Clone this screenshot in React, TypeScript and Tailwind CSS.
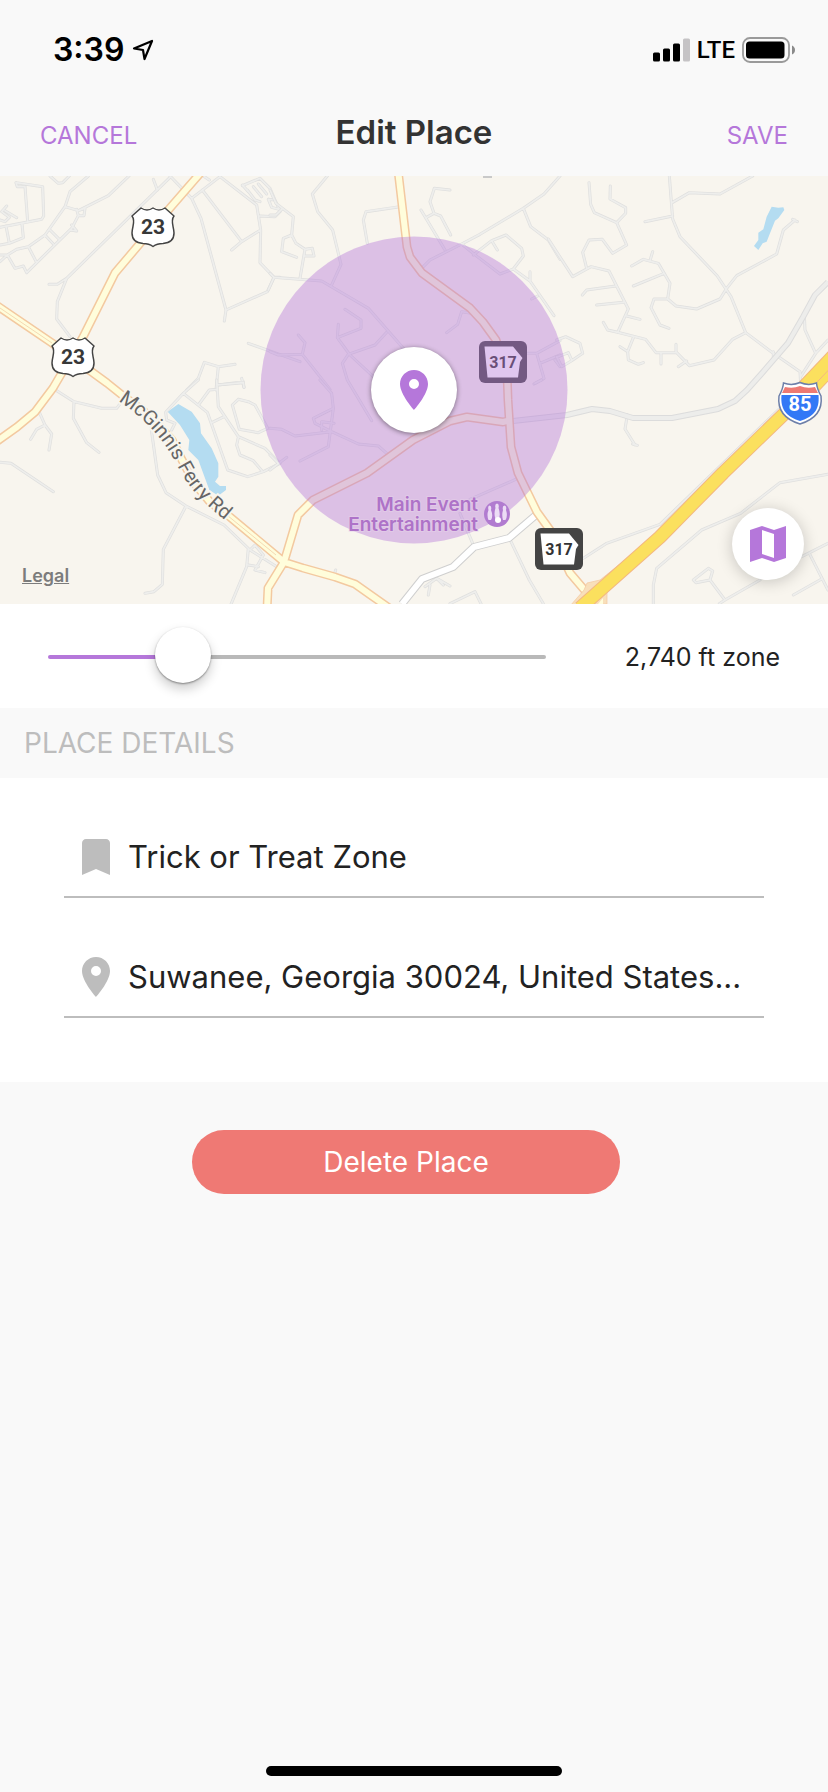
import React, { useState } from "react";
import { MdBookmark, MdLocationOn } from "react-icons/md";

const MIN_ZONE = 500;
const MAX_ZONE = 9740;

// Street geometry, stored per map tile at three units to the pixel
const tiles = [
  {
    id: "nw",
    transform: "translate(0 170) scale(0.33333)",
    water: "",
    streets:
      "M48 38L52 50L75 50L83 155M48 38L128 50L131 138L125 148L0 172M0 150L15 155L28 142L5 125L20 108M15 122L50 143M18 168L28 220M0 225L28 220L70 203L66 162M150 18L175 40L188 38L208 18M265 18L210 65L195 110L135 195L85 230L50 238L22 255L0 275M195 110L235 122L325 77L387 18M235 122L255 115L252 137L235 137L230 118M235 137L215 175L80 308L70 288L45 295L22 255M0 255L22 255M85 230L110 278M135 195L160 222M150 180L178 208M215 165L230 183L210 180M510 22L200 325L172 343L147 343M200 325L172 395L170 447L210 500M460 28L472 60M510 18L575 85L603 145L678 420L673 453M678 420L802 365L822 322L840 322M575 85L660 20L770 105L782 180L780 278L822 322M607 60L725 215L695 240M725 215L782 180M780 138L825 140L840 125M610 18L628 30M727 45L745 65M727 47L780 25L810 55L825 90M742 60L765 90L780 95M760 50L785 80M775 42L800 72M805 88L825 90L838 118L815 112L805 88M745 520L900 575M560 660L595 625L613 577L655 590L705 583M655 590L648 660M655 645L730 635M725 625L732 652",
  },
  {
    id: "sw",
    transform: "translate(0 380) scale(0.33333)",
    water:
      "M503 95L535 72L575 95L600 130L603 160L635 205L655 250L655 290L645 305L660 318L678 318L678 330L655 347L628 330L595 240L565 210L568 180L540 135Z",
    streets:
      "M170 32L222 65L305 85L350 85L365 65M222 65L220 115L260 188L297 217M118 97L135 135L110 148L92 178M135 135L155 162L147 210M0 247L33 250L160 335M452 135L473 285L498 338L558 378L672 435L750 510L830 560M558 378L490 508L487 613L462 635L435 640M595 0L550 40L497 97L500 120L525 130L515 150M550 40L622 97L683 270L743 290L790 275L840 250M595 75L628 30L652 28M650 0L655 80L715 170L795 205L840 250M650 15L730 8L732 22M635 128L672 110M715 58L697 75L718 148L775 158L803 145L765 75L745 65L715 58M715 172L710 195L720 225L760 242L788 275M745 505L740 560L690 680M750 510L765 495L790 525L765 570L795 578M745 555L775 560",
  },
  {
    id: "n",
    transform: "translate(270 170) scale(0.33333)",
    water: "",
    streets:
      "M0 60L18 100L70 140L65 195L40 205L35 245L80 262M65 195L78 220L105 238L90 325M105 238L127 235L132 258L105 258M0 135L18 135L35 118M-5 360L12 322L155 333L295 415L400 535M0 310L12 322M172 18L127 72L143 125L188 180L213 283L185 345M390 110L288 125L280 150L292 220M540 60L493 55L480 95L492 130L512 138L542 195M492 130L468 143M453 120L525 240M870 18L822 72L760 115L630 193L575 222L480 270L460 290M760 115L782 170L835 210L870 268M575 222L622 260L690 312L730 297L760 258L755 235L708 195L665 212L610 255M665 212L682 240M730 297L780 333L852 437M780 333L780 305M785 387L803 378M225 418L273 450L273 475L202 503L205 463M202 503L240 555L310 620M350 487L315 525L235 553L217 580L232 630L305 752M85 495L105 518L97 553L25 555L0 545M97 553L180 658M530 488L563 463L575 425L605 430M770 550L800 550L870 512M800 550L822 625L792 642M810 580L870 555M855 570L870 590",
  },
  {
    id: "s",
    transform: "translate(270 380) scale(0.33333)",
    water: "",
    streets:
      "M150 0L185 40L190 85L175 200L90 243M190 85L130 115L135 130L185 155L265 192L325 198L350 220M155 150L155 125L192 130M0 145L35 148L75 168L185 155M0 225L25 250M0 270L50 232M795 10L815 0M600 358L740 297M570 400L608 490M723 485L778 600L820 671M190 593L197 570M465 620L500 595L540 618M480 615L475 645M500 595L520 615M540 671L615 635L633 671",
  },
  {
    id: "ne",
    transform: "translate(550 170) scale(0.33333)",
    water:
      "M665 110L685 113L700 112L703 120L685 145L675 152L660 190L650 215L638 220L625 240L612 228L625 210L625 188L640 178L650 140Z",
    streets:
      "M117 38L122 103L133 128L200 158L227 130L227 113L180 87L181 48M200 158L230 225L188 250L157 208L117 210L98 247L110 295M-5 207L68 320L123 290L177 303L235 417L203 487M197 348L110 360L97 375M220 397L140 405M230 438L270 448M160 457L173 480L203 487L287 508L318 548L380 548L418 587L492 570L548 508L587 488M250 503L233 545L235 570L265 583L280 578M210 530L233 545M333 548L333 582M378 548L378 523M385 590L410 573M358 18L368 147L390 200L502 318L543 380L587 488L670 550L750 605L752 640M368 97L418 68L510 72L608 18M285 155L368 138M245 288L280 268L325 280L360 340L353 387L378 408L440 417L510 387L530 355L560 317L680 252L700 180L735 150M728 148L742 155M300 272L308 245M250 348L343 310M353 387L312 387L303 413L330 465L357 475M763 435L765 480L797 550L834 510M797 550L752 620M670 545L670 570L640 610M20 510L47 500L90 520L98 550L65 572L35 590L20 560M20 562L55 548L65 570",
  },
  {
    id: "se",
    transform: "translate(550 380) scale(0.33333)",
    water: "",
    streets:
      "M232 105L225 147L255 195M248 192L262 196M100 535L170 490L330 433L700 75M310 680L310 615L320 565L455 450L572 400L690 308L834 283M430 600L475 565L488 573L480 600L438 608ZM480 600L525 660L508 671M525 660L630 600M755 530L834 490M778 520L834 630M730 645L815 597",
  },
];

const avenues =
  "M828 282L815 295L803 317L788 343L763 372L747 390L735 401L718 409L672 418L633 418L610 411L592 409L567 415L513 421";

const mainRoads =
  "M203 170L170 208L115 273L83 337L53 388L35 412L17 427L-4 442M-4 305L52 343L107 383L122 395L150 416L172 440L182 460L195 484L210 502L230 517L284 562L303 568L335 577L355 584L372 596L392 610M284 562L268 588L267 610M284 562L298 515L313 500L367 473L413 440L450 421L467 417L503 422L511 420M398 170L407 247L410 257L422 273L470 308L483 322L496 340L507 372L508 400L511 447L518 473L537 512L550 530L570 573L587 593L600 612";

const UsShield = ({ x, y, label }: { x: number; y: number; label: string }) => (
  <g transform={`translate(${x} ${y})`}>
    <path
      d="M-12-19Q-6-15 0-19Q6-15 12-19L21-11C17-6 21 0 21 6C21 13 16 16 10 16.500Q4 16.500 0 19.500Q-4 16.500-10 16.500C-16 16-21 13-21 6C-21 0-17-6-21-11Z"
      fill="#fff"
      stroke="#444"
      strokeWidth="1.500"
      strokeLinejoin="round"
    />
    <text y="7" textAnchor="middle" className="fill-[#383838] font-[Roboto,sans-serif] text-[21px] font-bold">
      {label}
    </text>
  </g>
);

const StateShield = ({ x, y }: { x: number; y: number }) => (
  <g transform={`translate(${x} ${y})`}>
    <rect x="-24" y="-21" width="48" height="42" rx="6" fill="#444" />
    <path d="M-18.500-15.500H10L19.500-4L17-0L15 15.500H-15.500Z" fill="#fff" />
    <text x="0" y="6" textAnchor="middle" className="fill-[#333] font-[Roboto,sans-serif] text-[16px] font-bold">
      317
    </text>
  </g>
);

const InterstateShield = () => (
  <g transform="translate(800 403)">
    <path
      d="M-16.500-20Q-8-17 0-20.500Q8-17 16.500-20Q17-14 21-7C23 9 13 17 0 21C-13 17-23 9-21-7Q-17-14-16.500-20Z"
      fill="#fff"
      stroke="#6d7fa9"
      strokeWidth="1.500"
    />
    <path d="M-15-16Q-7-14 0-17Q7-14 15-16L18-10H-18Z" fill="#ee7a73" />
    <path d="M-18.500-8H18.500C20 8 12 14 0 18C-12 14-20 8-18.500-8Z" fill="#3378f6" />
    <text y="8" textAnchor="middle" className="fill-white font-[Roboto,sans-serif] text-[20px] font-bold">
      85
    </text>
  </g>
);

const PlaceMap = () => (
  <svg
    viewBox="0 176 828 428"
    preserveAspectRatio="xMidYMid slice"
    className="block h-full w-full bg-[#f8f5ee]"
    role="img"
    aria-label="Map"
  >
    {tiles.map((tile) => (
      <g key={tile.id} transform={tile.transform} fill="none" strokeLinejoin="round">
        <path d={tile.water} fill="#b4dcf1" />
        <path d={tile.streets} stroke="#dfdfde" strokeWidth="9" strokeLinecap="round" />
        <path d={tile.streets} stroke="#eeeeec" strokeWidth="5" strokeLinecap="round" />
      </g>
    ))}
    <g fill="none" strokeLinejoin="round">
      <path d={avenues} stroke="#dcdcdc" strokeWidth="6" />
      <path d={avenues} stroke="#ededeb" strokeWidth="4" />
      <path d="M402 604L422 579L453 567L474 547L509 538L536 515" stroke="#cfcfcf" strokeWidth="8" />
      <path d="M402 604L422 579L453 567L474 547L509 538L536 515" stroke="#fff" strokeWidth="6" />
      <path d={mainRoads} stroke="#f3c9a0" strokeWidth="9" />
      <path d={mainRoads} stroke="#fffddb" strokeWidth="6" />
      <path d="M0 308L52 343M222 511L276 555" stroke="#f5d9b3" strokeWidth="1" />
      <path d="M570 606L584 590L587 583L600 580L625 560L617 574L607 585V604Z" fill="#f8dfba" stroke="#f3c9a0" strokeWidth="0.700" />
      <path d="M836 360L783 415L723 473L660 537L580 608" stroke="#f3b782" strokeWidth="14" />
      <path d="M836 360L783 415L723 473L660 537L580 608" stroke="#fbe05e" strokeWidth="12" />
      <path d="M840 354L800 396" stroke="#f3b782" strokeWidth="21" />
      <path d="M840 354L800 396" stroke="#fbe05e" strokeWidth="19" />
      <path d="M840 358L800 400" stroke="#f3b782" strokeWidth="1" />
      <path d="M598 604L603 598L603 604Z" fill="#fffddb" />
    </g>
    <path d="M483 176H492V178H483Z" fill="#c9c9c9" />

    <path id="ferry-road" d="M118 401C146 419 164 440 177 465S200 500 232 526" fill="none" />
    <text
      className="fill-[#666] stroke-[#f8f5ee] stroke-4 font-[Roboto,sans-serif] text-[20px]"
      paintOrder="stroke"
    >
      <textPath href="#ferry-road">McGinnis Ferry Rd</textPath>
    </text>

    <UsShield x={153} y={227} label="23" />
    <UsShield x={73} y={357} label="23" />
    <InterstateShield />
    <StateShield x={503} y={362} />
    <circle cx="414" cy="390" r="153.500" fill="#b577da" fillOpacity="0.420" />
    <StateShield x={559} y={549} />

    <text
      textAnchor="end"
      className="fill-[#ae73c8] stroke-[#e6d3ea]/50 stroke-2 font-[Inter,sans-serif] text-[19px] font-semibold"
      paintOrder="stroke"
    >
      <tspan x="478" y="511">Main Event</tspan>
      <tspan x="478" y="531">Entertainment</tspan>
    </text>
    <circle cx="497" cy="514" r="13" fill="#b17bd0" />
    <g fill="#ecdcf5">
      <path d="M489.500 505.500Q492 506 491 510Q493.500 516 491 520H488.500Q486.500 515 488.500 510Q487.500 506 489.500 505.500Z" />
      <path d="M497 503.500Q499.500 504 498.500 508Q501 515 498.500 519H495.500Q493.500 514 495.500 508Q494.500 504 497 503.500Z" />
      <path d="M504.500 505.500Q507 506 506 510Q508 516 505.500 520H503Q501.500 515 503 510Q502 506 504.500 505.500Z" />
      <circle cx="498" cy="520" r="3" fill="#fff" />
    </g>
  </svg>
);

const StatusBar = () => (
  <div className="flex h-25 items-center justify-between pr-8 pl-[53px] text-black">
    <div className="flex items-center gap-2">
      <span className="text-[32px] leading-10 font-semibold">3:39</span>
      <svg viewBox="0 0 22 22" className="h-[22px] w-[22px]" fill="none">
        <path d="M20 2L12.500 20L11 11L2 9.500Z" stroke="#000" strokeWidth="2.200" strokeLinejoin="round" />
      </svg>
    </div>
    <div className="flex items-center gap-[7px]">
      <svg viewBox="0 0 37 24" className="h-6 w-[37px]">
        <rect x="0" y="14.500" width="7" height="9" rx="1.500" />
        <rect x="10" y="10.500" width="7" height="13" rx="1.500" />
        <rect x="20" y="5.500" width="7" height="18" rx="1.500" />
        <rect x="30" y="0.500" width="7" height="23" rx="1.500" fill="#c5c3c5" />
      </svg>
      <span className="font-[Roboto,sans-serif] text-[24px] leading-8 font-medium">LTE</span>
      <svg viewBox="0 0 54 26" className="h-[26px] w-[54px]">
        <rect x="1" y="1" width="46" height="24" rx="7" fill="none" stroke="#9a9a9a" strokeWidth="1.800" />
        <rect x="4" y="4.500" width="38.500" height="17" rx="3.500" />
        <path d="M50 8.500Q53 10 53 13T50 17.500Z" fill="#8a8a8a" />
      </svg>
    </div>
  </div>
);

const App = () => {
  const [zone, setZone] = useState(2740);
  const progress = ((zone - MIN_ZONE) / (MAX_ZONE - MIN_ZONE)) * 100;

  return (
    <div className="flex min-h-screen flex-col bg-[#f9f9f9] font-[Inter,sans-serif] text-[#222]">
      <StatusBar />
      <header className="grid h-19 grid-cols-[1fr_auto_1fr] items-baseline px-10 pt-3">
        <button type="button" className="justify-self-start text-[24px] leading-8 text-[#b577da]">
          CANCEL
        </button>
        <h1 className="text-[33px] leading-10 font-semibold text-[#333]">Edit Place</h1>
        <button type="button" className="justify-self-end text-[24px] leading-8 text-[#b577da]">
          SAVE
        </button>
      </header>

      <section className="relative h-[428px] overflow-hidden">
        <PlaceMap />
        <div className="absolute top-1/2 left-1/2 flex size-[86px] -translate-1/2 items-center justify-center rounded-full bg-white shadow-[0_1px_5px_rgba(0,0,0,0.45)]">
          <MdLocationOn size={48} className="text-[#b577da]" />
        </div>
        <a href="#legal" className="absolute bottom-4 left-[22px] text-[18px] leading-6 font-semibold text-[#7c7c7c] underline">
          Legal
        </a>
        <button
          type="button"
          aria-label="Map type"
          className="absolute right-6 bottom-6 flex size-18 items-center justify-center rounded-full bg-white shadow-[0_2px_16px_rgba(0,0,0,0.2)]"
        >
          <svg viewBox="0 0 36 36" className="size-9" fill="#b577da" fillRule="evenodd">
            <path d="M0 4L12 0L24 4L36 0V32L24 36L12 32L0 36ZM12 4V28L24 32V8Z" />
          </svg>
        </button>
      </section>

      <section className="flex h-26 items-center justify-between bg-white px-12 pt-0.5">
        <input
          id="zone"
          type="range"
          min={MIN_ZONE}
          max={MAX_ZONE}
          value={zone}
          onChange={(e) => setZone(Number(e.target.value))}
          style={{ "--progress": `${progress}%` } as React.CSSProperties}
          className="h-14 w-[68%] cursor-pointer appearance-none bg-transparent outline-none [&::-webkit-slider-runnable-track]:h-1 [&::-webkit-slider-runnable-track]:rounded-full [&::-webkit-slider-runnable-track]:bg-[linear-gradient(to_right,#b577da_var(--progress),#b9b9b9_var(--progress))] [&::-webkit-slider-thumb]:-mt-7 [&::-webkit-slider-thumb]:size-14 [&::-webkit-slider-thumb]:appearance-none [&::-webkit-slider-thumb]:rounded-full [&::-webkit-slider-thumb]:bg-white [&::-webkit-slider-thumb]:shadow-[0_1px_2px_rgba(0,0,0,0.4),0_6px_12px_rgba(0,0,0,0.2)]"
        />
        <label htmlFor="zone" className="text-[25px] leading-8">
          {zone.toLocaleString("en-US")} ft zone
        </label>
      </section>

      <h2 className="flex h-[70px] items-center px-6 text-[28px] leading-8 text-[#bdbdbd]">PLACE DETAILS</h2>

      <section className="bg-white px-16 pb-16">
        <label className="flex h-30 items-center gap-2 border-b-2 border-[#bdbdbd] px-2 pt-10">
          <MdBookmark size={48} className="shrink-0 text-[#bdbdbd]" />
          <input
            aria-label="Place name"
            defaultValue="Trick or Treat Zone"
            className="min-w-0 flex-1 bg-transparent text-[31px] leading-10 outline-none"
          />
        </label>
        <label className="flex h-30 items-center gap-2 border-b-2 border-[#bdbdbd] px-2 pt-10">
          <MdLocationOn size={48} className="shrink-0 text-[#bdbdbd]" />
          <input
            aria-label="Address"
            defaultValue="Suwanee, Georgia 30024, United States..."
            className="min-w-0 flex-1 bg-transparent text-[31px] leading-10 outline-none"
          />
        </label>
      </section>

      <div className="pt-12 pr-52 pl-48">
        <button type="button" className="h-16 w-full rounded-full bg-[#ef7974] text-[28px] leading-8 text-white">
          Delete Place
        </button>
      </div>

      <div className="mt-auto flex justify-center pb-4">
        <div className="h-2.5 w-[296px] rounded-full bg-black" />
      </div>
    </div>
  );
};

export default App;
